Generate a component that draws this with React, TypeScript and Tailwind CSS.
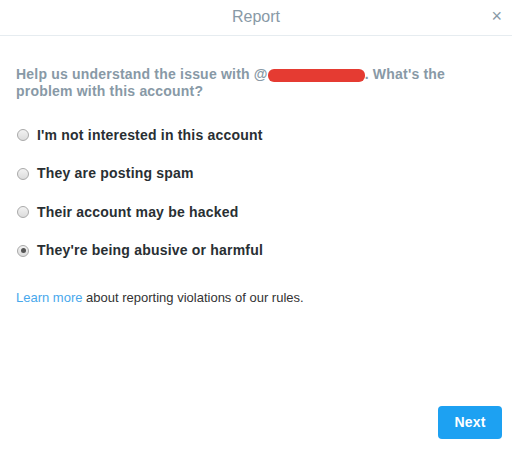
import React from "react";

const options = [
  "I'm not interested in this account",
  "They are posting spam",
  "Their account may be hacked",
  "They're being abusive or harmful",
];

function Radio({ checked }: { checked: boolean }) {
  return (
    <span className="flex h-[12px] w-[12px] shrink-0 items-center justify-center rounded-full border border-[#a9a9a9] bg-gradient-to-b from-[#f2f2f2] to-[#dcdcdc]">
      {checked && <span className="h-[5px] w-[5px] rounded-full bg-[#555]" />}
    </span>
  );
}

export default function App() {
  return (
    <div className="flex h-[450px] w-[512px] flex-col bg-white font-['Liberation_Sans',Arial,sans-serif]">
      <div className="relative flex h-[36px] shrink-0 items-center justify-center border-b border-[#e6ecf0]">
        <span className="-mt-[2px] text-[16px] text-[#8899a6]">Report</span>
        <span className="absolute right-[10px] top-[7px] text-[18px] leading-none text-[#8899a6]">×</span>
      </div>
      <div className="flex flex-1 flex-col px-4">
        <div className="mt-[30px] flex flex-col text-[14px] font-bold leading-[17px] tracking-[0.2px] text-[#8899a6]">
          <div className="flex items-center whitespace-nowrap">
            <span>Help us understand the issue with @</span>
            <span className="mt-[2px] h-[13px] w-[97px] rounded-[6px] bg-[#e53b32]" />
            <span>. What's the</span>
          </div>
          <div>problem with this account?</div>
        </div>
        <div className="mt-[16px] flex flex-col">
          {options.map((o, i) => (
            <div key={o} className="flex h-[38.5px] items-center gap-[8px] pl-px">
              <Radio checked={i === 3} />
              <span className="text-[14px] font-bold tracking-[0.2px] text-[#292f33]">{o}</span>
            </div>
          ))}
        </div>
        <p className="mt-[18px] text-[13px] text-[#333]">
          <span className="text-[#48a8ec]">Learn more</span> about reporting violations of our rules.
        </p>
        <div className="mt-auto mb-[11px] flex justify-end">
          <button className="-mr-[6px] h-[33px] w-[64px] rounded-[4px] bg-[#1da1f2] text-[14px] font-bold tracking-[0.2px] text-white">
            Next
          </button>
        </div>
      </div>
    </div>
  );
}
